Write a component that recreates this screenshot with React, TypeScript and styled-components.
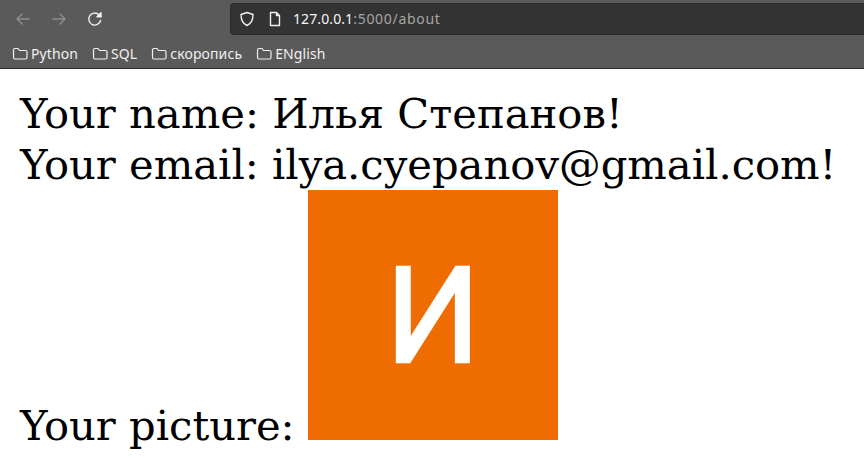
import { createGlobalStyle, styled } from "styled-components";

const GlobalStyle = createGlobalStyle`
  html, body {
    margin: 0;
    padding: 0;
    background: #fff;
  }
`;

const Toolbar = styled.header`
  height: 68px;
  background: #5a5a5a;
  border-bottom: 1px solid #2a2a2a;
  display: flex;
  flex-direction: column;
  overflow: hidden;
`;

const NavRow = styled.div`
  height: 37px;
  display: flex;
  align-items: center;
  padding-top: 1px;
  box-sizing: border-box;
`;

const NavButtons = styled.div`
  width: 230px;
  flex: none;
  display: flex;
  align-items: center;
  gap: 20px;
  padding-left: 15px;
  box-sizing: border-box;
`;

const NavIcon = styled.svg<{ $dim?: boolean }>`
  width: 16px;
  height: 16px;
  flex: none;
  fill: none;
  stroke: ${({ $dim }) => ($dim ? "#8f8f8f" : "#f0f0f0")};
  stroke-width: 1.4;
  stroke-linecap: round;
  stroke-linejoin: round;
`;

const UrlBar = styled.div`
  flex: 1;
  height: 32px;
  margin-top: -1px;
  background: #333;
  border: 1px solid #2b2b2b;
  border-right: none;
  border-radius: 4px 0 0 4px;
  display: flex;
  align-items: center;
  padding-left: 8px;
  box-sizing: border-box;
`;

const UrlIcon = styled.svg<{ $gap: number }>`
  width: 16px;
  height: 16px;
  flex: none;
  margin-right: ${({ $gap }) => $gap}px;
  fill: none;
  stroke: #f0f0f0;
  stroke-width: 1.4;
  stroke-linejoin: round;
`;

const UrlText = styled.span`
  font-family: "Noto Sans", sans-serif;
  font-size: 14px;
  letter-spacing: 0.7px;
  color: #a6a6a6;
  white-space: pre;
`;

const UrlHost = styled.span`
  color: #f5f5f5;
  letter-spacing: 0.1px;
`;

const BookmarkRow = styled.nav`
  height: 31px;
  display: flex;
  align-items: center;
  gap: 14px;
  padding-left: 12px;
  padding-top: 2px;
  box-sizing: border-box;
`;

const Bookmark = styled.div`
  display: flex;
  align-items: center;
  gap: 3px;
  font-family: "Noto Sans", sans-serif;
  font-size: 14px;
  letter-spacing: 0.1px;
  color: #f0f0f0;
`;

const FolderIcon = styled.svg`
  width: 16px;
  height: 16px;
  flex: none;
  fill: none;
  stroke: #f0f0f0;
  stroke-width: 1.2;
  stroke-linejoin: round;
`;

const Content = styled.main`
  padding: 20px 20px 0;
  font-family: "DejaVu Serif", serif;
  font-size: 41.7px;
  color: #000;
  white-space: nowrap;
`;

const Line = styled.div`
  line-height: 50.5px;
`;

const Avatar = styled.span`
  display: inline-block;
  width: 250px;
  height: 250px;
  background: #ef6c00;
  overflow: hidden;
  text-align: center;
  line-height: 254px;
`;

const AvatarLetter = styled.span`
  font-family: "Roboto", sans-serif;
  font-size: 133px;
  font-weight: 400;
  color: #fff;
  -webkit-text-stroke: 2.4px #fff;
  filter: blur(0.7px);
`;

const bookmarks = ["Python", "SQL", "скоропись", "ENglish"];

const Folder = () => (
  <FolderIcon viewBox="0 0 16 16">
    <path d="M1.5 4a1.5 1.5 0 0 1 1.5-1.5h3l1.5 2h6a1.5 1.5 0 0 1 1.5 1.5v5.5a1.5 1.5 0 0 1-1.5 1.5H3a1.5 1.5 0 0 1-1.5-1.5z" />
  </FolderIcon>
);

export default function App() {
  return (
    <>
      <GlobalStyle />
      <Toolbar>
        <NavRow>
          <NavButtons>
            <NavIcon $dim viewBox="0 0 16 16">
              <path d="M14 8H2M7 3 2 8l5 5" />
            </NavIcon>
            <NavIcon $dim viewBox="0 0 16 16">
              <path d="M2 8h12M9 3l5 5-5 5" />
            </NavIcon>
            <NavIcon viewBox="0 0 16 16">
              <path d="M13.6 9.5A6 6 0 1 1 12 3.8L14 5.6" />
              <path d="M14 1.8v4h-4z" fill="#f0f0f0" />
            </NavIcon>
          </NavButtons>
          <UrlBar>
            <UrlIcon $gap={12} viewBox="0 0 16 16">
              <path d="M8 1.5 14 3.5c0 5-1.5 9-6 11-4.500-2-6-6-6-11z" />
            </UrlIcon>
            <UrlIcon $gap={10} viewBox="0 0 16 16">
              <path d="M3.500 1.500h6l3 3v10h-9zM9.500 1.500v3h3" />
            </UrlIcon>
            <UrlText>
              <UrlHost>127.0.0.1</UrlHost>:5000/about
            </UrlText>
          </UrlBar>
        </NavRow>
        <BookmarkRow>
          {bookmarks.map((name) => (
            <Bookmark key={name}>
              <Folder />
              {name}
            </Bookmark>
          ))}
        </BookmarkRow>
      </Toolbar>
      <Content>
        <Line>Your name: Илья Степанов!</Line>
        <Line>Your email: ilya.cyepanov@gmail.com!</Line>
        <Line>
          Your picture:{" "}
          <Avatar>
            <AvatarLetter>И</AvatarLetter>
          </Avatar>
        </Line>
      </Content>
    </>
  );
}
